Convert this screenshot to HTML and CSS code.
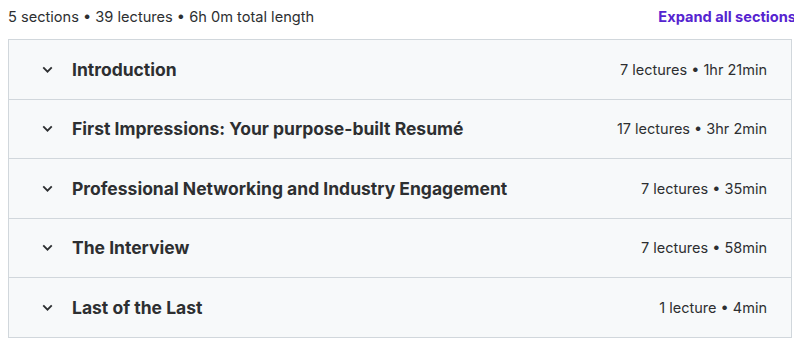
FILE: index.html
```html
<!DOCTYPE html>
<html lang="en">
<head>
    <meta charset="UTF-8">
    <meta name="viewport" content="width=device-width, initial-scale=1.0">
    <title>Course content</title>
    <link rel="stylesheet" href="styles.css">
</head>
<body>

    <div class="curriculum">
        <!-- Summary line above the sections -->
        <div class="summary">
            <span class="summary-text">5 sections • 39 lectures • 6h 0m total length</span>
            <button class="expand-all">Expand all sections</button>
        </div>

        <!-- Collapsed sections -->
        <div class="sections">
            <div class="section">
                <svg class="chevron" viewBox="0 0 24 24"><path d="M6 9l6 6 6-6"/></svg>
                <span class="section-title">Introduction</span>
                <span class="section-meta">7 lectures • 1hr 21min</span>
            </div>
            <div class="section">
                <svg class="chevron" viewBox="0 0 24 24"><path d="M6 9l6 6 6-6"/></svg>
                <span class="section-title">First Impressions: Your purpose-built Resumé</span>
                <span class="section-meta">17 lectures • 3hr 2min</span>
            </div>
            <div class="section">
                <svg class="chevron" viewBox="0 0 24 24"><path d="M6 9l6 6 6-6"/></svg>
                <span class="section-title">Professional Networking and Industry Engagement</span>
                <span class="section-meta">7 lectures • 35min</span>
            </div>
            <div class="section">
                <svg class="chevron" viewBox="0 0 24 24"><path d="M6 9l6 6 6-6"/></svg>
                <span class="section-title">The Interview</span>
                <span class="section-meta">7 lectures • 58min</span>
            </div>
            <div class="section">
                <svg class="chevron" viewBox="0 0 24 24"><path d="M6 9l6 6 6-6"/></svg>
                <span class="section-title">Last of the Last</span>
                <span class="section-meta">1 lecture • 4min</span>
            </div>
        </div>
    </div>

</body>
</html>
```

FILE: styles.css
```css
/* Page basics */
body {
    margin: 0;
    padding: 0 0 0 8px;
    background-color: #fff;
    font-family: Inter, "Noto Sans", sans-serif;
    color: #2d2f31;
    overflow: hidden;
}

.curriculum {
    width: 784px;
}

/* Summary row */
.summary {
    display: flex;
    justify-content: space-between;
    align-items: center;
    height: 34px;
    margin-right: -4px;
    margin-bottom: 5px;
}

.summary-text {
    font-size: 14.6px;
}

.expand-all {
    background: none;
    border: none;
    padding: 0;
    font-family: inherit;
    font-size: 14.6px;
    font-weight: 700;
    color: #5624d0;
    cursor: pointer;
}

/* Section list */
.sections {
    border: 1px solid #d1d7dc;
}

.section {
    display: flex;
    align-items: center;
    height: 58.5px;
    padding: 0 24px 0 30px;
    background-color: #f7f9fa;
    border-bottom: 1px solid #d1d7dc;
}

.section:last-child {
    border-bottom: none;
}

.chevron {
    width: 17px;
    height: 17px;
    fill: none;
    stroke: #2d2f31;
    stroke-width: 2.6;
    margin-right: 16px;
}

.section-title {
    flex: 1;
    font-size: 17.5px;
    font-weight: 700;
}

.section-meta {
    font-size: 14.5px;
}
```
